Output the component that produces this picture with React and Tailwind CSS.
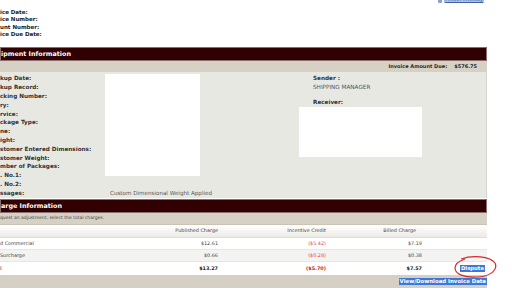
import React from 'react';

const topLabels = ['ice Date:', 'ice Number:', 'unt Number:', 'ice Due Date:'];

const shipLabels = [
    'kup Date:',
    'kup Record:',
    'cking Number:',
    'ry:',
    'rvice:',
    'ckage Type:',
    'ne:',
    'ight:',
    'stomer Entered Dimensions:',
    'stomer Weight:',
    'mber of Packages:',
    '. No.1:',
    '. No.2:',
    'ssages:',
];

const charges = [
    { name: 'd Commercial', published: '$12.61', credit: '($5.42)', billed: '$7.19', bg: 'bg-white' },
    { name: 'Surcharge', published: '$0.66', credit: '($0.28)', billed: '$0.38', bg: 'bg-[#f3f3f1]' },
];

function Band({ title }) {
    return (
        <div className="h-[15px] bg-[#fff] pt-[1px]">
            <div className="h-[14px] bg-[#310000] border border-[#8a6d6d] flex items-center">
                <span className="text-white font-bold text-[6.4px] leading-none">{title}</span>
            </div>
        </div>
    );
}

export default function App() {
    return (
        <div className="relative w-[512px] h-[291px] overflow-hidden bg-white text-[#222]" style={{ fontFamily: '"DejaVu Sans", Verdana, sans-serif' }}>
            {/* top invoice labels */}
            <div className="h-[46px] relative">
                <div className="pt-[9px] flex flex-col">
                    {topLabels.map(l => (
                        <div key={l} className="h-[7.4px] leading-[7.4px] text-[5.5px] font-bold text-[#222]">{l}</div>
                    ))}
                </div>
                <div className="absolute right-[28px] top-[-5px] flex items-center gap-[2px]">
                    <span className="w-[4px] h-[4px] mt-[4px] bg-[#8da3c9] rounded-[1px]" />
                    <span className="bg-[#aebfe2] text-[#3b5fa8] underline text-[5px] leading-[8px] px-[1px]">Printer Friendly</span>
                </div>
            </div>

            <div className="w-[487px]">
                <Band title="ipment Information" />
                <div className="h-[11px] bg-[#d7d1c5] flex items-center justify-end pr-[10px] gap-[7px] text-[5px] font-bold text-[#2a2a2a]">
                    <span>Invoice Amount Due:</span>
                    <span>$576.75</span>
                </div>
                <div className="h-[126px] bg-[#e8e8e3] flex border-r border-[#d8d4cc]">
                    <div className="grid grid-cols-[105px_190px] auto-rows-[8.8px] pt-[2.4px] h-full">
                        {shipLabels.map((l, i) => (
                            <div key={l} className="text-[5.7px] font-bold leading-[8.8px] text-[#333] whitespace-nowrap" style={{ gridRow: i + 1, gridColumn: 1 }}>{l}</div>
                        ))}
                        <div className="bg-white w-[95px] h-[102px]" style={{ gridRow: '1 / span 12', gridColumn: 2 }} />
                        <div className="text-[5.6px] leading-[8.8px] text-[#555] pl-[5px] whitespace-nowrap" style={{ gridRow: 14, gridColumn: 2 }}>Custom Dimensional Weight Applied</div>
                    </div>
                    <div className="ml-[4px] pt-[2px] flex flex-col">
                        <div className="pl-[14px] text-[5.7px] leading-[8px] font-bold text-[#333]">Sender :</div>
                        <div className="pl-[14px] text-[5.7px] leading-[10px] text-[#555]">SHIPPING MANAGER</div>
                        <div className="pl-[14px] mt-[6px] text-[5.7px] leading-[8px] font-bold text-[#333]">Receiver:</div>
                        <div className="w-[123px] h-[50px] bg-white mt-[1px]" />
                    </div>
                </div>

                <Band title="arge Information" />
                <div className="h-[12px] bg-[#d7d1c5] flex items-center text-[4.5px] text-[#444] border-b border-[#c9c3b6]">
                    quest an adjustment, select the total charges.
                </div>

                <div className="grid grid-cols-[150px_68px_108px_96px_65px] text-[4.9px] text-[#444]">
                    <div className="h-[13px] col-span-5 grid grid-cols-subgrid items-center bg-gradient-to-b from-[#ffffff] to-[#ecebe5] border-b border-[#e0ded6]">
                        <div />
                        <div className="text-right whitespace-nowrap">Published Charge</div>
                        <div className="text-right whitespace-nowrap">Incentive Credit</div>
                        <div className="text-right whitespace-nowrap pr-[6px]">Billed Charge</div>
                        <div />
                    </div>
                    {charges.map(c => (
                        <div key={c.name} className={`h-[12px] col-span-5 grid grid-cols-subgrid items-center border-b border-[#e6e6e2] ${c.bg}`}>
                            <div className="whitespace-nowrap">{c.name}</div>
                            <div className="text-right">{c.published}</div>
                            <div className="text-right text-[#e04545]">{c.credit}</div>
                            <div className="text-right">{c.billed}</div>
                            <div />
                        </div>
                    ))}
                    <div className="h-[13px] col-span-5 grid grid-cols-subgrid items-center bg-white font-bold text-[#222]">
                        <div className="text-[#888]">l</div>
                        <div className="text-right">$13.27</div>
                        <div className="text-right text-[#cc2020]">($5.70)</div>
                        <div className="text-right">$7.57</div>
                        <div className="flex justify-end pr-[2px]">
                            <span className="bg-[#3d78d8] text-white text-[5.3px] leading-[7px] px-[1px]">Dispute</span>
                        </div>
                    </div>
                    <div className="h-[13px] col-span-5 flex items-center justify-end bg-[#d6d0c4]">
                        <span className="bg-[#3d78d8] text-white font-bold text-[5.4px] leading-[7px] px-[1px]">View/Download Invoice Data</span>
                    </div>
                </div>
            </div>

            <svg className="absolute left-[452px] top-[255px]" width="46" height="24" viewBox="0 0 46 24">
                <path d="M9 4 C20 0 38 1 43 8 C46 14 40 21 26 22 C12 23 3 19 3 13 C3 9 7 6 13 4" fill="none" stroke="#d8282c" strokeWidth="1.2" />
            </svg>
        </div>
    );
}
